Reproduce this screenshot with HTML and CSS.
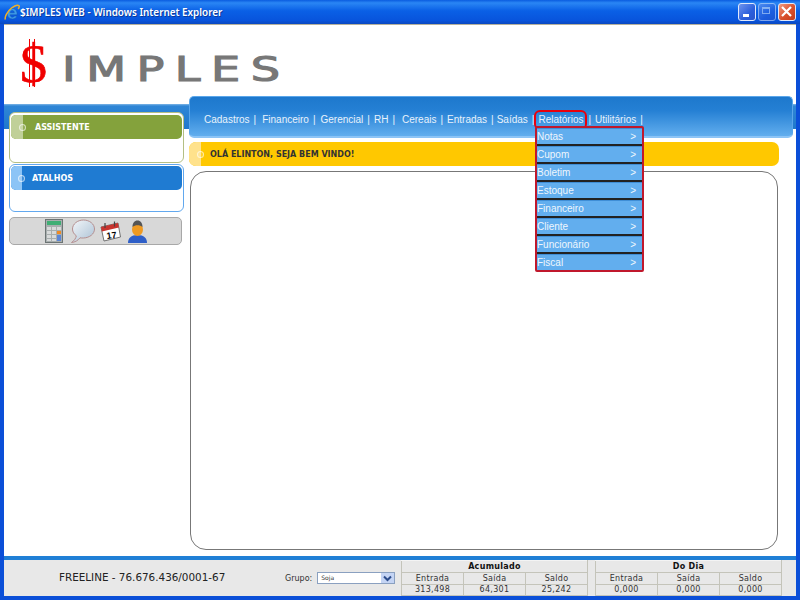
FILE: index.html
```html
<!DOCTYPE html>
<html lang="pt-BR">
<head>
  <meta charset="UTF-8">
  <title>$IMPLES WEB</title>
  <link rel="stylesheet" href="styles.css">
</head>
<body>
  <div class="window">
    <div class="titlebar">
      <svg class="ie-logo" width="16" height="17" viewBox="0 0 16 17">
        <path d="M8.300 4.500c-3 0-5 2.400-5 5.300 0 3 2 5.200 5.100 5.200 2.200 0 3.900-1.100 4.600-3H10.400c-.4.800-1.100 1.200-2 1.200-1.300 0-2.200-1-2.300-2.400h7c.3-3.700-1.700-6.300-4.800-6.300zM6.200 8.700c.2-1.300 1-2.200 2.100-2.200s1.900.900 2 2.200z" fill="#3d9be6" stroke="#1656b4" stroke-width=".5"/>
        <path d="M1.500 15.500C.3 13.500 3 7.500 7.500 4c3.500-2.700 6.500-3.200 7.500-2.200.6.700 0 2-.8 3.200" fill="none" stroke="#f0b028" stroke-width="1.500"/>
      </svg>
      <span class="title-text">$IMPLES WEB - Windows Internet Explorer</span>
      <div class="win-buttons">
        <div class="win-btn"><span class="min-glyph"></span></div>
        <div class="win-btn off"><span class="max-glyph"></span></div>
        <div class="win-btn close">
          <svg width="13" height="13" viewBox="0 0 13 13"><path d="M2 2l9 9M11 2l-9 9" stroke="#fff" stroke-width="2.200"/></svg>
        </div>
      </div>
    </div>

    <div class="page">
      <div class="logo">
        <span class="logo-dollar">$</span>
        <span class="logo-name">IMPLES</span>
      </div>

      <div class="main">
        <div class="sidebar">
          <div class="side-box green">
            <div class="side-head"><span class="head-tab"><i class="dot"></i></span>ASSISTENTE</div>
          </div>
          <div class="side-box blue">
            <div class="side-head"><span class="head-tab"><i class="dot"></i></span>ATALHOS</div>
          </div>
          <div class="tools">
            <svg width="18" height="24" viewBox="0 0 18 24">
              <rect x=".5" y=".5" width="17" height="23" fill="#a8aeae" stroke="#6c7474"/>
              <rect x="2" y="2" width="14" height="4" fill="#3fae74"/>
              <g fill="#d8dada">
                <rect x="2" y="8" width="4" height="3"/><rect x="7" y="8" width="4" height="3"/><rect x="12" y="8" width="4" height="3"/>
                <rect x="2" y="12" width="4" height="3"/><rect x="7" y="12" width="4" height="3"/>
                <rect x="2" y="16" width="4" height="3"/><rect x="7" y="16" width="4" height="3"/>
                <rect x="2" y="20" width="4" height="2"/><rect x="7" y="20" width="4" height="2"/>
              </g>
              <rect x="12" y="12" width="4" height="3" fill="#f08a24"/>
              <rect x="12" y="16" width="4" height="6" fill="#5c86d6"/>
            </svg>
            <svg width="25" height="25" viewBox="0 0 25 25">
              <defs>
                <linearGradient id="bubble" x1="0" y1="0" x2="1" y2="1">
                  <stop offset="0" stop-color="#f4f7fa"/><stop offset="1" stop-color="#a9c0d4"/>
                </linearGradient>
              </defs>
              <path d="M13.500 1C7.500 1 2.500 5 2.500 10c0 2.800 1.500 5.200 3.800 6.800C6 19 4.500 21.500 1.500 23.500c3.500-.3 6.500-2 8.500-4.700 1.100.2 2.300.3 3.500.2 6-.2 11-4 11-9S19.500 1 13.500 1z" fill="url(#bubble)" stroke="#b58f90"/>
            </svg>
            <svg class="cal" width="21" height="21" viewBox="0 0 21 21">
              <path d="M1 6l17-4 2.500 14L4 20z" fill="#fff" stroke="#555" stroke-width=".8"/>
              <path d="M1 6l17-4 .9 4.500L1.900 10.500z" fill="#c8332e"/>
              <path d="M5 2v5M14.500 .5v5" stroke="#444" stroke-width="1.200"/>
              <text class="cal-day" x="6.500" y="17.500" transform="rotate(-8 11 14)">17</text>
            </svg>
            <svg width="19" height="23" viewBox="0 0 19 23">
              <path d="M0 23c0-5 3-8 9.500-8s9.500 3 9.500 8z" fill="#2f5fc8"/>
              <ellipse cx="9.500" cy="9.500" rx="5.500" ry="6.500" fill="#ef9a22"/>
              <path d="M4.500 7C4.500 3 6.500 .5 9.500 .5S14.500 3 14.500 7C12 4.500 7 4.500 4.500 7z" fill="#555"/>
            </svg>
          </div>
        </div>

        <div class="content">
          <div class="nav">
            <a href="#">Cadastros</a><span class="sep">|</span>
            <a href="#">Financeiro</a><span class="sep">|</span>
            <a href="#">Gerencial</a><span class="sep">|</span>
            <a href="#">RH</a><span class="sep">|</span>
            <a href="#">Cereais</a><span class="sep">|</span>
            <a href="#">Entradas</a><span class="sep">|</span>
            <a href="#">Saídas</a><span class="sep">|</span>
            <a href="#" class="current">Relatórios</a><span class="sep">|</span>
            <a href="#">Utilitários</a><span class="sep">|</span>
            <ul class="dropdown">
              <li>Notas<span>&gt;</span></li>
              <li>Cupom<span>&gt;</span></li>
              <li>Boletim<span>&gt;</span></li>
              <li>Estoque<span>&gt;</span></li>
              <li>Financeiro<span>&gt;</span></li>
              <li>Cliente<span>&gt;</span></li>
              <li>Funcionário<span>&gt;</span></li>
              <li>Fiscal<span>&gt;</span></li>
            </ul>
          </div>
          <div class="welcome"><span class="head-tab"><i class="dot"></i></span>OLÁ ELINTON, SEJA BEM VINDO!</div>
          <div class="frame"></div>
        </div>
      </div>

      <div class="footer">
        <div class="company">FREELINE - 76.676.436/0001-67</div>
        <div class="group">
          <label>Grupo:</label>
          <div class="select">Soja
            <span class="select-arrow">
              <svg width="9" height="7" viewBox="0 0 9 7"><path d="M1 1.500l3.500 3.500L8 1.500" fill="none" stroke="#2c4c8c" stroke-width="2"/></svg>
            </span>
          </div>
        </div>
        <table class="totals">
          <tr><th colspan="3">Acumulado</th></tr>
          <tr><td>Entrada</td><td>Saída</td><td>Saldo</td></tr>
          <tr class="values"><td>313,498</td><td>64,301</td><td>25,242</td></tr>
        </table>
        <table class="totals">
          <tr><th colspan="3">Do Dia</th></tr>
          <tr><td>Entrada</td><td>Saída</td><td>Saldo</td></tr>
          <tr class="values"><td>0,000</td><td>0,000</td><td>0,000</td></tr>
        </table>
      </div>
    </div>
  </div>
</body>
</html>
```

FILE: styles.css
```css
html, body {
  margin: 0;
  height: 100%;
  overflow: hidden;
}

body {
  font-family: "Liberation Sans", Arial, sans-serif;
}

.window {
  width: 800px;
  height: 600px;
  display: flex;
  flex-direction: column;
  background-color: #0b4fd8;
}

.titlebar {
  height: 24px;
  flex: none;
  display: flex;
  align-items: center;
  padding: 0 4px;
  box-sizing: border-box;
  background: linear-gradient(#0a5ce0, #2a86f4 12%, #0a60e6 45%, #0854dc 85%, #0a48c0);
  color: white;
}

.ie-logo {
  flex: none;
}

.title-text {
  margin-left: 0;
  font-family: "Noto Sans", sans-serif;
  font-size: 9.900px;
  font-weight: 600;
  text-shadow: 1px 1px 0 #0b3a9c;
}

.win-buttons {
  margin-left: auto;
  display: flex;
  gap: 2px;
}

.win-btn {
  width: 16px;
  height: 16px;
  border: 1px solid #dfe8fb;
  border-radius: 3px;
  background: linear-gradient(135deg, #6f95ee, #2c5fdc 60%, #2a55cc);
  position: relative;
}

.win-btn.off {
  opacity: 0.55;
}

.win-btn.close {
  background: linear-gradient(135deg, #ee9a80, #d9502c 55%, #c23c1c);
}

.min-glyph {
  position: absolute;
  left: 4px;
  bottom: 3px;
  width: 6px;
  height: 3px;
  background-color: white;
}

.max-glyph {
  position: absolute;
  left: 3px;
  top: 3px;
  width: 8px;
  height: 7px;
  border: 1px solid #dfe8fb;
  border-top-width: 2px;
  box-sizing: border-box;
}

.win-btn.close svg {
  display: block;
  margin: 1px;
}

.page {
  flex: 1;
  margin: 0 4px 4px;
  background-color: white;
  display: flex;
  flex-direction: column;
  min-height: 0;
  border-top: 1px solid #b5b09c;
}

.logo {
  height: 71px;
  flex: none;
  display: flex;
  align-items: center;
  padding-left: 16px;
  padding-top: 7px;
  box-sizing: border-box;
}

/* the two thin bars of the dollar sign go over the glyph */
.logo-dollar {
  position: relative;
  width: 24px;
  text-align: center;
  font-family: "Liberation Serif", serif;
  font-size: 54px;
  line-height: 50px;
  color: #f00000;
  -webkit-text-stroke: 0.6px #f00000;
}

.logo-dollar::before,
.logo-dollar::after {
  content: "";
  position: absolute;
  top: 0;
  height: 48px;
  width: 1px;
  background-color: #f00000;
}

.logo-dollar::before {
  left: 9px;
}

.logo-dollar::after {
  left: 14px;
}

.logo-name {
  display: inline-block;
  font-family: "DejaVu Sans", sans-serif;
  font-size: 33px;
  color: #777;
  margin-left: 18px;
  margin-top: 10px;
  letter-spacing: 7.500px;
  -webkit-text-stroke: 1.1px #777;
  transform: scaleX(1.4);
  transform-origin: left center;
}

.main {
  flex: 1;
  display: flex;
  min-height: 0;
  background: linear-gradient(#fff 8px, #7fb6e6 8px, #2f86d6 10px, #1f78cc 33px, #fff 33px);
}

.sidebar {
  width: 185px;
  flex: none;
  padding: 16px 0 0 5px;
  box-sizing: border-box;
}

.side-box {
  width: 175px;
  height: 51px;
  box-sizing: border-box;
  padding: 1px;
  background-color: white;
  border: 1px solid;
  border-radius: 6px;
  margin-bottom: 1px;
}

.side-box.green {
  border-color: #b4bf84;
}

.side-box.green .side-head {
  margin-top: 1px;
}

.side-box.blue {
  border-color: #62a8ee;
  height: 48px;
  margin-bottom: 5px;
}

.side-head {
  height: 24px;
  border-radius: 5px;
  display: flex;
  align-items: center;
  font-family: "DejaVu Sans", sans-serif;
  font-size: 8px;
  font-weight: bold;
  color: white;
}

.green .side-head {
  background-color: #84a23c;
}

.blue .side-head {
  background-color: #1f7bd2;
}

.head-tab {
  width: 12px;
  align-self: stretch;
  margin-right: 12px;
  border-radius: 5px 0 0 5px;
  display: flex;
  align-items: center;
  justify-content: flex-end;
}

.green .head-tab {
  background-color: #c0d098;
}

.blue .head-tab {
  background-color: #8cc4f6;
  width: 11px;
  margin-right: 10px;
}

.dot {
  display: block;
  width: 5px;
  height: 5px;
  margin-right: -3px;
  border: 1px solid rgba(255, 255, 255, 0.6);
  border-radius: 50%;
  background-color: rgba(255, 255, 255, 0.15);
}

.tools {
  width: 173px;
  height: 28px;
  box-sizing: border-box;
  background-color: #d8d8d8;
  border: 1px solid #a8a8a8;
  border-radius: 5px;
  display: flex;
  align-items: center;
  justify-content: flex-start;
  gap: 7px;
  padding-left: 35px;
}

.tools .cal {
  margin-left: -2px;
}

.cal-day {
  font-family: "Liberation Sans", sans-serif;
  font-size: 9px;
  font-weight: bold;
}

.content {
  flex: 1;
  padding-left: 0;
  min-width: 0;
  position: relative;
}

.nav {
  height: 42px;
  margin-top: 0;
  width: 604px;
  box-sizing: border-box;
  background: linear-gradient(#1d78cd, #2580d4 35%, #62aeee);
  border: 1px solid #5aa6ea;
  border-bottom: 2px solid #8cc4f6;
  border-radius: 5px;
  display: flex;
  align-items: center;
  padding: 6px 0 0 14px;
  color: #e8f2fc;
  font-size: 10px;
  position: relative;
  white-space: nowrap;
}

.nav a {
  color: #e8f2fc;
  text-decoration: none;
}

.nav a:nth-of-type(2) {
  margin-left: 2px;
}

.nav a:nth-of-type(3) {
  margin-left: 1px;
}

.nav a:nth-of-type(5) {
  margin-left: 3px;
}

.nav a:nth-of-type(7) {
  margin-left: -1px;
}

.nav a.current {
  outline: 2px solid #e8000c;
  border-radius: 4px;
  line-height: 12px;
  padding: 2px;
  margin: 0 -1px 0 -2px;
}

.sep {
  margin: 0 4px;
}

.dropdown {
  list-style: none;
  margin: 0;
  padding: 0;
  position: absolute;
  left: 345px;
  top: 29px;
  width: 109px;
  box-sizing: border-box;
  border: 2px solid #c0182c;
  border-radius: 2px;
  background-color: #222;
  z-index: 2;
}

.dropdown li {
  height: 15px;
  line-height: 15px;
  margin-bottom: 2px;
  padding: 0 6px 0 0;
  display: flex;
  justify-content: space-between;
  background-color: #62aeee;
  color: #eef6fd;
  border-top: 1px solid #3f8ed6;
}

.dropdown li:last-child {
  margin-bottom: 0;
}

.welcome {
  width: 590px;
  height: 24px;
  margin-top: 4px;
  padding-top: 1px;
  box-sizing: border-box;
  background-color: #ffc800;
  border-radius: 7px;
  display: flex;
  align-items: center;
  font-family: "DejaVu Sans", sans-serif;
  font-size: 8px;
  font-weight: bold;
  color: #333;
}

.welcome .head-tab {
  background-color: #ffe28c;
  margin-top: -1px;
  margin-right: 9px;
  border-radius: 7px 0 0 7px;
}

.frame {
  width: 588px;
  height: 379px;
  box-sizing: border-box;
  margin: 5px 0 0 1px;
  border: 1px solid #777;
  border-radius: 16px;
  background-color: white;
}

.footer {
  height: 40px;
  flex: none;
  margin-top: 0;
  box-sizing: border-box;
  border-top: 4px solid #1f7fd6;
  background-color: #e8e8e8;
  display: flex;
  align-items: flex-start;
  font-family: "DejaVu Sans", sans-serif;
}

.company {
  width: 277px;
  flex: none;
  padding-left: 55px;
  box-sizing: border-box;
  font-size: 10.400px;
  line-height: 34px;
  color: #222;
  white-space: nowrap;
}

.group {
  width: 120px;
  flex: none;
  display: flex;
  align-items: center;
  gap: 4px;
  padding-top: 12px;
  padding-left: 4px;
  box-sizing: border-box;
  font-size: 8px;
  color: #333;
}

.select {
  width: 78px;
  height: 12px;
  margin-left: 1px;
  box-sizing: border-box;
  border: 1px solid #8aa0c0;
  background-color: white;
  font-size: 6px;
  line-height: 10px;
  padding-left: 3px;
  position: relative;
}

.select-arrow {
  position: absolute;
  right: 0;
  top: 0;
  bottom: 0;
  width: 13px;
  background-color: #c4d4f4;
  display: flex;
  align-items: center;
  justify-content: center;
}

.totals {
  width: 187px;
  margin-right: 7px;
  border-collapse: collapse;
  table-layout: fixed;
  font-size: 8px;
  color: #333;
  text-align: center;
}

.totals th,
.totals td {
  height: 11px;
  line-height: 11px;
  padding: 0;
  border: 1px solid #c4c4ba;
  border-top-color: #f4f4f4;
  letter-spacing: 0.3px;
}

.totals .values td {
  height: 10px;
  line-height: 10px;
}

.totals th {
  color: #111;
}
```
